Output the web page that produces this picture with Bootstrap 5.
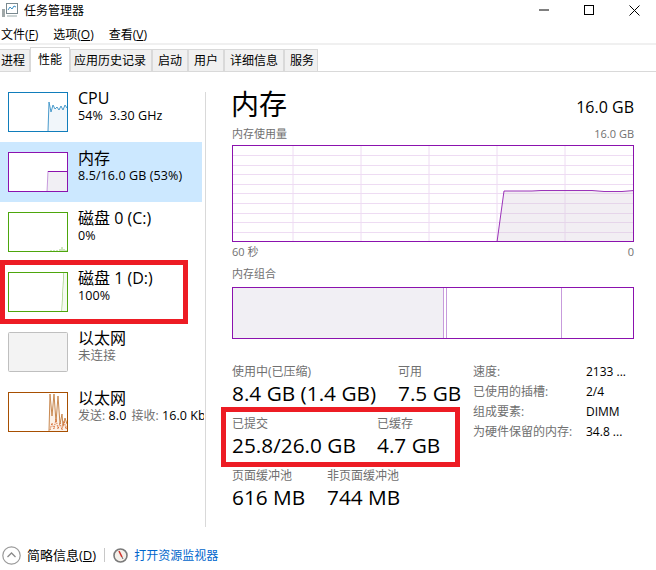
<!DOCTYPE html>
<html lang="zh-CN">
<head>
<meta charset="utf-8">
<title>任务管理器</title>
<link rel="stylesheet" href="https://cdn.jsdelivr.net/npm/bootstrap@5.3.0/dist/css/bootstrap.min.css">
<style>
html,body{height:100%;}
body{width:656px;height:570px;overflow:hidden;background:#fff;color:#000;font-family:"Open Sans","Noto Sans CJK SC",sans-serif;font-size:12px;line-height:17px;position:relative;}
svg{display:block;flex:none;}
.tm-title{height:20px;}
.tm-title-text{margin-left:5px;padding-left:0;}
.tm-appicon{margin-left:2px;}
.tm-winbtns{margin-left:auto;padding-right:16px;gap:35px;}
.tm-menu{margin-top:6px;height:17px;gap:15px;padding-left:1px;}
.tm-rule{height:2px;background:#f0f0f0;}
.tm-tabs{height:27px;padding-top:2px;border-bottom:1px solid #d9d9d9;align-items:flex-end;flex-wrap:nowrap;}
.tm-tab{height:22px;margin-right:1px;padding:0 2px;background:#f0f0f0;border:1px solid #d9d9d9;border-bottom:0;line-height:22px;color:#000;white-space:nowrap;margin-bottom:0;}
.tm-tab-first{border-left:0;width:30px;padding-left:1px;margin-right:0;}
.tm-tab-on{height:25px;width:40px;background:#fff;margin-bottom:-1px;line-height:23px;padding:0 7px;margin-right:0;text-align:center;}
.tm-tab-w81{width:82px;padding-left:3px;margin-right:0;margin-left:0;}
.tm-tab-w36{width:36px;padding-left:5px;margin-right:0;}
.tm-tab-w60{width:60px;padding-left:5px;margin-right:0;}
.tm-tab-w34{width:34px;padding-left:5px;margin-right:0;}
.tm-body{margin-top:10px;height:455px;}
.tm-side{width:204px;overflow:hidden;flex:none;}
.tm-item{height:60px;width:202px;padding:10px 0 0 8px;gap:10px;white-space:nowrap;}
.tm-item-on{background:#cce8ff;}
.tm-name{font-size:16px;line-height:20px;margin-top:-4px;}
.tm-sub{font-size:12.5px;line-height:16px;letter-spacing:.1px;}
.tm-sub-gap{margin-left:5px;}
.tm-muted{color:#707070;}
.tm-netlab{font-size:12px;letter-spacing:0;}
.tm-divider{width:1px;background:#d9d9d9;margin:10px 0;flex:none;margin-left:1px;}
.tm-main{width:402px;margin-left:26px;flex:none;padding-top:4px;}
.tm-head{height:36px;align-items:center;}
.tm-h1{font-size:28px;line-height:36px;margin-left:-1px;}
.tm-h2{font-size:16px;margin-top:6px;}
.tm-cap{font-size:11px;line-height:15px;color:#707070;}
.tm-caprow{margin-top:4px;height:16px;}
.tm-chart{margin-top:3px;}
.tm-axis{margin-top:2px;height:16px;}
.tm-comp-cap{margin-top:6px;height:16px;}
.tm-comp{margin-top:5px;}
.tm-stats{margin-top:25px;}
.tm-left{width:241px;flex:none;}
.tm-statrow{height:52px;}
.tm-pair-a{width:166px;}
.tm-pair-b{width:145px;}
.tm-pair-c{width:95px;}
.tm-val{font-size:20.8px;line-height:26px;white-space:nowrap;}
.tm-lab{font-size:12px;line-height:16px;color:#707070;white-space:nowrap;}
.tm-dl{font-size:12px;line-height:20px;white-space:nowrap;margin-top:-2px;}
.tm-dl-k{width:113px;color:#707070;}
.tm-foot{height:30px;padding-left:2px;align-items:center;margin-top:3px;}
.tm-foot-text{margin-left:6px;font-size:13px;}
.tm-sep{width:1px;height:14px;background:#c8c8c8;margin:0 8px;}
.tm-link{color:#06c;text-decoration:none;margin-left:6px;}
.tm-u{text-decoration:underline;}
.tm-redbox{position:absolute;border:5px solid #ed1c24;pointer-events:none;}
.tm-red1{left:0;top:260px;width:188px;height:64px;}
.tm-red2{left:221px;top:407px;width:239px;height:60px;}
</style>
</head>
<body>
<div class="tm-title d-flex align-items-center">
  <svg class="tm-appicon" width="17" height="16" viewBox="0 0 17 16"><rect x="4.5" y="1.5" width="11" height="10" fill="#fff" stroke="#7a8a90"/><path d="M6 8l2-3 2 2 2-3 2 1" fill="none" stroke="#3b8fc4"/><rect x="0" y="7" width="3" height="8" fill="#a0a8a8"/><path d="M5 14h10" stroke="#9aa"/></svg>
  <span class="tm-title-text">任务管理器</span>
  <div class="tm-winbtns d-flex align-items-center">
    <svg width="10" height="10" viewBox="0 0 10 10"><path d="M0 5h10" stroke="#000"/></svg>
    <svg width="10" height="10" viewBox="0 0 10 10"><rect x=".5" y=".5" width="9" height="9" fill="none" stroke="#000"/></svg>
    <svg width="11" height="11" viewBox="0 0 11 11"><path d="M.5.5l10 10M10.500.5l-10 10" stroke="#000" fill="none"/></svg>
  </div>
</div>
<div class="tm-menu d-flex">
  <span>文件(<span class="tm-u">F</span>)</span><span>选项(<span class="tm-u">O</span>)</span><span>查看(<span class="tm-u">V</span>)</span>
</div>
<div class="tm-rule"></div>
<div class="tm-tabs nav d-flex">
  <div class="tm-tab tm-tab-first">进程</div>
  <div class="tm-tab tm-tab-on">性能</div>
  <div class="tm-tab tm-tab-w81">应用历史记录</div>
  <div class="tm-tab tm-tab-w36">启动</div>
  <div class="tm-tab tm-tab-w36">用户</div>
  <div class="tm-tab tm-tab-w60">详细信息</div>
  <div class="tm-tab tm-tab-w34">服务</div>
</div>
<div class="tm-body d-flex">
  <div class="tm-side">
    <div class="tm-item d-flex">
      <svg width="60" height="40" viewBox="0 0 60 40"><path d="M40 36L41 10 43 20 45 13 47 17 49 15 51 18 53 14 55 18 57 13 59 16V39H40Z" fill="#f1f6fa"/><path d="M40 39L41 10 43 20 45 13 47 17 49 15 51 18 53 14 55 18 57 13 59 16" fill="none" stroke="#4a9bcc"/><rect x=".5" y=".5" width="59" height="39" fill="none" stroke="#117dbb"/></svg>
      <div><div class="tm-name">CPU</div><div class="tm-sub">54%&nbsp; 3.30 GHz</div></div>
    </div>
    <div class="tm-item tm-item-on d-flex">
      <svg width="60" height="40" viewBox="0 0 60 40"><rect width="60" height="40" fill="#fff"/><path d="M39 40L40 19H60V40Z" fill="#f1eff4"/><path d="M39 40L40 19" stroke="#c79bdc" fill="none"/><path d="M40 19.500H60" stroke="#8b12ae"/><rect x=".5" y=".5" width="59" height="39" fill="none" stroke="#8b12ae"/></svg>
      <div><div class="tm-name">内存</div><div class="tm-sub">8.5/16.0 GB (53%)</div></div>
    </div>
    <div class="tm-item d-flex">
      <svg width="60" height="40" viewBox="0 0 60 40"><path d="M43 39v-1M46 39v-1M49 39v-1M52 39v-2M54 39v-4M56 39v-2M58 39v-1" stroke="#9ccb7c" fill="none"/><rect x=".5" y=".5" width="59" height="39" fill="none" stroke="#4da60c"/></svg>
      <div><div class="tm-name">磁盘 0 (C:)</div><div class="tm-sub">0%</div></div>
    </div>
    <div class="tm-item d-flex">
      <svg width="60" height="40" viewBox="0 0 60 40"><path d="M54 39.500L56 1" stroke="#9ccb7c" fill="none" stroke-width="1.300"/><path d="M56 1H60V40H54Z" fill="#f4faf0"/><rect x=".5" y=".5" width="59" height="39" fill="none" stroke="#4da60c"/></svg>
      <div><div class="tm-name">磁盘 1 (D:)</div><div class="tm-sub">100%</div></div>
    </div>
    <div class="tm-item d-flex">
      <svg width="60" height="40" viewBox="0 0 60 40"><rect x=".5" y=".5" width="59" height="39" rx="1" fill="#f3f3f3" stroke="#bfbfbf"/></svg>
      <div><div class="tm-name">以太网</div><div class="tm-sub tm-muted">未连接</div></div>
    </div>
    <div class="tm-item d-flex">
      <svg width="60" height="40" viewBox="0 0 60 40"><path d="M41 39V30L42 2 44 24 46 2 48 30 50 4 52 32 54 22 55 34 57 26 59 32V39Z" fill="#fbf1e8"/><path d="M41 39L42 2 44 24 46 2 48 30 50 4 52 32 54 22 55 34 57 26 59 32" fill="none" stroke="#c98a52"/><path d="M42 38l2-7 2 6 2-10 2 10 2-6 2 7 2-9 2 8 2-5" fill="none" stroke="#d9703a" stroke-dasharray="1.500 1"/><rect x=".5" y=".5" width="59" height="39" fill="none" stroke="#a74f01"/></svg>
      <div><div class="tm-name">以太网</div><div class="tm-sub"><span class="tm-muted tm-netlab">发送:</span> 8.0<span class="tm-muted tm-netlab tm-sub-gap">接收:</span> 16.0 Kbps</div></div>
    </div>
  </div>
  <div class="tm-divider"></div>
  <div class="tm-main">
    <div class="tm-head d-flex justify-content-between">
      <div class="tm-h1">内存</div><div class="tm-h2">16.0 GB</div>
    </div>
    <div class="tm-caprow d-flex justify-content-between tm-cap"><span>内存使用量</span><span>16.0 GB</span></div>
    <svg class="tm-chart" width="402" height="97" viewBox="0 0 402 97">
      <path d="M0 10.500H402M0 20.500H402M0 29.500H402M0 39.500H402M0 48.500H402M0 58.500H402M0 68.500H402M0 77.500H402M0 87.500H402M61 0V97M129 0V97M197 0V97M265 0V97M333 0V97" stroke="#eedcf3" fill="none"/>
      <path d="M265 97L272 46H300L309 45.500H360L372 46.500H390L402 45.500V97Z" fill="#d4c8d8" fill-opacity=".3"/>
      <path d="M265 97L272 46H300L309 45.500H360L372 46.500H390L402 45.500" stroke="#8b12ae" fill="none" opacity=".85"/>
      <rect x=".5" y=".5" width="401" height="96" fill="none" stroke="#8b12ae"/>
    </svg>
    <div class="tm-axis d-flex justify-content-between tm-cap"><span>60 秒</span><span>0</span></div>
    <div class="tm-comp-cap tm-cap">内存组合</div>
    <svg class="tm-comp" width="402" height="52" viewBox="0 0 402 52">
      <rect x="0" y="0" width="211" height="52" fill="#f1eff4"/>
      <path d="M211.500 0V52M214.500 0V52M329.500 0V52" stroke="#c79bdc" fill="none"/>
      <rect x=".5" y=".5" width="401" height="51" fill="none" stroke="#8b12ae"/>
    </svg>
    <div class="tm-stats d-flex">
      <div class="tm-left">
        <div class="tm-statrow d-flex">
          <div class="tm-pair-a"><div class="tm-lab">使用中(已压缩)</div><div class="tm-val">8.4 GB (1.4 GB)</div></div>
          <div><div class="tm-lab">可用</div><div class="tm-val">7.5 GB</div></div>
        </div>
        <div class="tm-statrow d-flex">
          <div class="tm-pair-b"><div class="tm-lab">已提交</div><div class="tm-val">25.8/26.0 GB</div></div>
          <div><div class="tm-lab">已缓存</div><div class="tm-val">4.7 GB</div></div>
        </div>
        <div class="tm-statrow d-flex">
          <div class="tm-pair-c"><div class="tm-lab">页面缓冲池</div><div class="tm-val">616 MB</div></div>
          <div><div class="tm-lab">非页面缓冲池</div><div class="tm-val">744 MB</div></div>
        </div>
      </div>
      <div class="tm-dl">
        <div class="d-flex"><span class="tm-dl-k">速度:</span><span>2133 ...</span></div>
        <div class="d-flex"><span class="tm-dl-k">已使用的插槽:</span><span>2/4</span></div>
        <div class="d-flex"><span class="tm-dl-k">组成要素:</span><span>DIMM</span></div>
        <div class="d-flex"><span class="tm-dl-k">为硬件保留的内存:</span><span>34.8 ...</span></div>
      </div>
    </div>
  </div>
</div>
<div class="tm-foot d-flex">
  <svg width="19" height="19" viewBox="0 0 19 19"><circle cx="9.500" cy="9.500" r="8.700" fill="#fff" stroke="#9a9a9a" stroke-width="1.200"/><path d="M5.500 11l4-4 4 4" fill="none" stroke="#8a8a8a" stroke-width="1.300"/></svg>
  <span class="tm-foot-text">简略信息(<span class="tm-u">D</span>)</span>
  <span class="tm-sep"></span>
  <svg width="15" height="15" viewBox="0 0 15 15"><circle cx="7.500" cy="7.500" r="6.500" fill="#f4f0ea" stroke="#7a7a7a" stroke-width="1.600"/><path d="M6 3l3 6" stroke="#d0342c" stroke-width="1.600" fill="none"/><path d="M9 9l1 2" stroke="#666" fill="none"/></svg>
  <a class="tm-link" href="#">打开资源监视器</a>
</div>
<div class="tm-redbox tm-red1"></div>
<div class="tm-redbox tm-red2"></div>
<script src="https://cdn.jsdelivr.net/npm/bootstrap@5.3.0/dist/js/bootstrap.bundle.min.js"></script>
</body>
</html>
